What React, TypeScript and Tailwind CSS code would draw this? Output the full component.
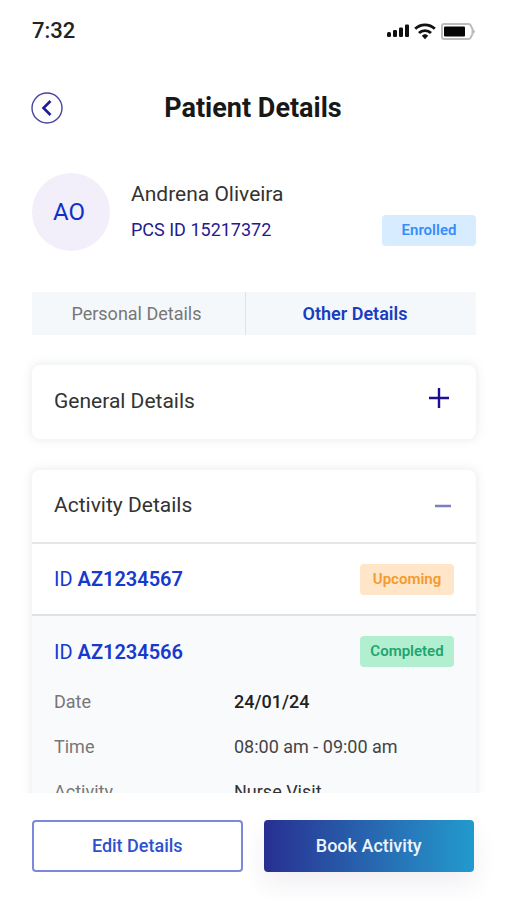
import type { ReactNode } from "react";

const SignalIcon = () => (
  <svg width="22" height="16" viewBox="0 0 22 16" fill="#111" aria-hidden="true">
    <rect x="0" y="9" width="4" height="5" rx="1.5" />
    <rect x="6" y="7" width="4" height="7" rx="1.2" />
    <rect x="12" y="4.500" width="4" height="9.500" rx="1.2" />
    <rect x="18" y="1.500" width="4" height="12.500" rx="1" />
  </svg>
);

const WifiIcon = () => (
  <svg width="22" height="17" viewBox="0 0 22 17" fill="none" stroke="#111" strokeWidth="2.800" aria-hidden="true">
    <path d="M1.200 5.800C6.600 0.600 15.400 0.600 20.800 5.800" />
    <path d="M5 10C8.200 6.800 13.800 6.800 17 10" />
    <path d="M11 11.200C12.300 11.200 13.500 11.800 14.200 12.800L11 16.200L7.800 12.800C8.500 11.800 9.700 11.200 11 11.200Z" fill="#111" stroke="none" />
  </svg>
);

const BatteryIcon = () => (
  <svg width="34" height="17" viewBox="0 0 34 17" aria-hidden="true">
    <path d="M3 1H27.500Q29 1 29.600 2.200L31.500 6V11L29.600 14.800Q29 16 27.500 16H3Q1 16 1 14V3Q1 1 3 1Z" fill="#fff" stroke="#bdbdbd" strokeWidth="2" />
    <path d="M32 6.500Q34 7 34 8.500Q34 10 32 10.500Z" fill="#bdbdbd" />
    <rect x="3" y="3.500" width="21" height="10" rx="1" fill="#050505" />
  </svg>
);

const BackIcon = () => (
  <svg width="32" height="32" viewBox="0 0 32 32" fill="none" aria-hidden="true">
    <circle cx="16" cy="16" r="15" stroke="#4545a3" strokeWidth="1.4" />
    <path d="M19.500 9L12.500 16L19.500 23" stroke="#1d1d96" strokeWidth="2.600" />
  </svg>
);

const PlusIcon = () => (
  <svg width="22" height="22" viewBox="0 0 22 22" stroke="#1c118c" strokeWidth="2.400" aria-hidden="true">
    <path d="M1 11H21M11 1V21" />
  </svg>
);

const MinusIcon = () => (
  <svg width="18" height="22" viewBox="0 0 18 22" stroke="#7b7fba" strokeWidth="2.400" aria-hidden="true">
    <path d="M1 11H17" />
  </svg>
);

const Badge = ({ className, children }: { className: string; children: ReactNode }) => (
  <span className={`flex h-[31px] w-[94px] shrink-0 items-center justify-center rounded text-[15px] font-semibold ${className}`}>
    {children}
  </span>
);

const details = [
  { label: "Date", value: "24/01/24", className: "font-medium text-[#222]" },
  { label: "Time", value: "08:00 am - 09:00 am", className: "text-[#444]" },
  { label: "Activity", value: "Nurse Visit", className: "text-[#333]" },
];

export default function App() {
  return (
    <div className="flex h-screen flex-col bg-white font-['Roboto','Noto_Sans',sans-serif] text-[#333]">
      <div className="flex shrink-0 items-center justify-between pt-4 pr-[31px] pl-8">
        <span className="text-[22px] leading-[30px] font-medium text-[#222]">7:32</span>
        <div className="flex items-center gap-[5px]">
          <SignalIcon />
          <WifiIcon />
          <BatteryIcon />
        </div>
      </div>

      <header className="mt-[46px] grid shrink-0 grid-cols-[32px_1fr_32px] items-center px-[31px]">
        <button type="button" aria-label="Back">
          <BackIcon />
        </button>
        <h1 className="text-center text-[27px] leading-8 font-bold text-[#181818]">Patient Details</h1>
      </header>

      <main className="mt-6 min-h-0 flex-1 overflow-y-auto pt-[25px] pr-[30px] pl-8 [scrollbar-width:none]">
        <section className="flex items-center gap-[21px]">
          <div className="flex size-[78px] shrink-0 items-center justify-center rounded-full bg-[#f2effa] text-2xl text-[#0d32c8]">
            <span className="pr-1">AO</span>
          </div>
          <div className="min-w-0 flex-1">
            <p className="text-[21px] leading-9">Andrena Oliveira</p>
            <div className="flex items-center justify-between">
              <p className="text-lg leading-9 text-[#1f2090]">PCS ID 15217372</p>
              <Badge className="bg-[#d8ecff] text-[#368dfb]">Enrolled</Badge>
            </div>
          </div>
        </section>

        <div role="tablist" className="mt-[41px] grid grid-cols-[214px_1fr] bg-[#f5f8fb] text-lg">
          <button type="button" role="tab" aria-selected="false" className="h-[43px] border-r border-[#dde3e8] pr-1 text-[#777]">
            Personal Details
          </button>
          <button type="button" role="tab" aria-selected="true" className="h-[43px] pr-3 font-semibold text-[#1a3cc0]">
            Other Details
          </button>
        </div>

        <section className="mt-[30px] rounded-lg bg-white shadow-[0_0_8px_2px_rgba(100,125,130,0.12)]">
          <button type="button" aria-expanded="false" className="flex h-[74px] w-full items-center justify-between pr-[26px] pl-[22px] text-[21px]">
            General Details
            <span className="pb-2">
              <PlusIcon />
            </span>
          </button>
        </section>

        <section className="mt-[31px] overflow-hidden rounded-t-lg bg-white shadow-[0_0_8px_2px_rgba(100,125,130,0.12)]">
          <button type="button" aria-expanded="true" className="flex h-[74px] w-full items-center justify-between border-b-2 border-[#e3e5e6] pr-6 pl-[22px] text-[21px]">
            Activity Details
            <MinusIcon />
          </button>
          <div className="flex h-[72px] items-center justify-between border-b-2 border-[#dfe2e4] px-[22px] text-xl text-[#1639ce]">
            <p>
              ID <span className="font-semibold">AZ1234567</span>
            </p>
            <Badge className="bg-[#ffe6c8] text-[#f59a2c]">Upcoming</Badge>
          </div>
          <div className="bg-[#f8fafc] px-[22px] pb-6">
            <div className="flex h-[63px] items-center justify-between pt-2 text-xl text-[#1639ce]">
              <p>
                ID <span className="font-semibold">AZ1234566</span>
              </p>
              <Badge className="bg-[#b2efd0] text-[#1fa56f]">Completed</Badge>
            </div>
            <dl className="grid grid-cols-[180px_1fr] text-[18px] leading-[45px]">
              {details.map(({ label, value, className }) => (
                <div key={label} className="contents">
                  <dt className="text-[#777]">{label}</dt>
                  <dd className={className}>{value}</dd>
                </div>
              ))}
            </dl>
          </div>
        </section>
      </main>

      <footer className="grid shrink-0 grid-cols-2 gap-[21px] bg-white px-8 pt-[27px] pb-7 text-lg font-medium">
        <button type="button" className="h-[52px] rounded border-2 border-[#7c88dc] text-[#2c52cf]">
          Edit Details
        </button>
        <button type="button" className="h-[52px] rounded bg-linear-to-r from-[#272f91] to-[#229acd] text-[#edf4ff] shadow-[0_12px_24px_rgba(80,40,90,0.08)]">
          Book Activity
        </button>
      </footer>
    </div>
  );
}
